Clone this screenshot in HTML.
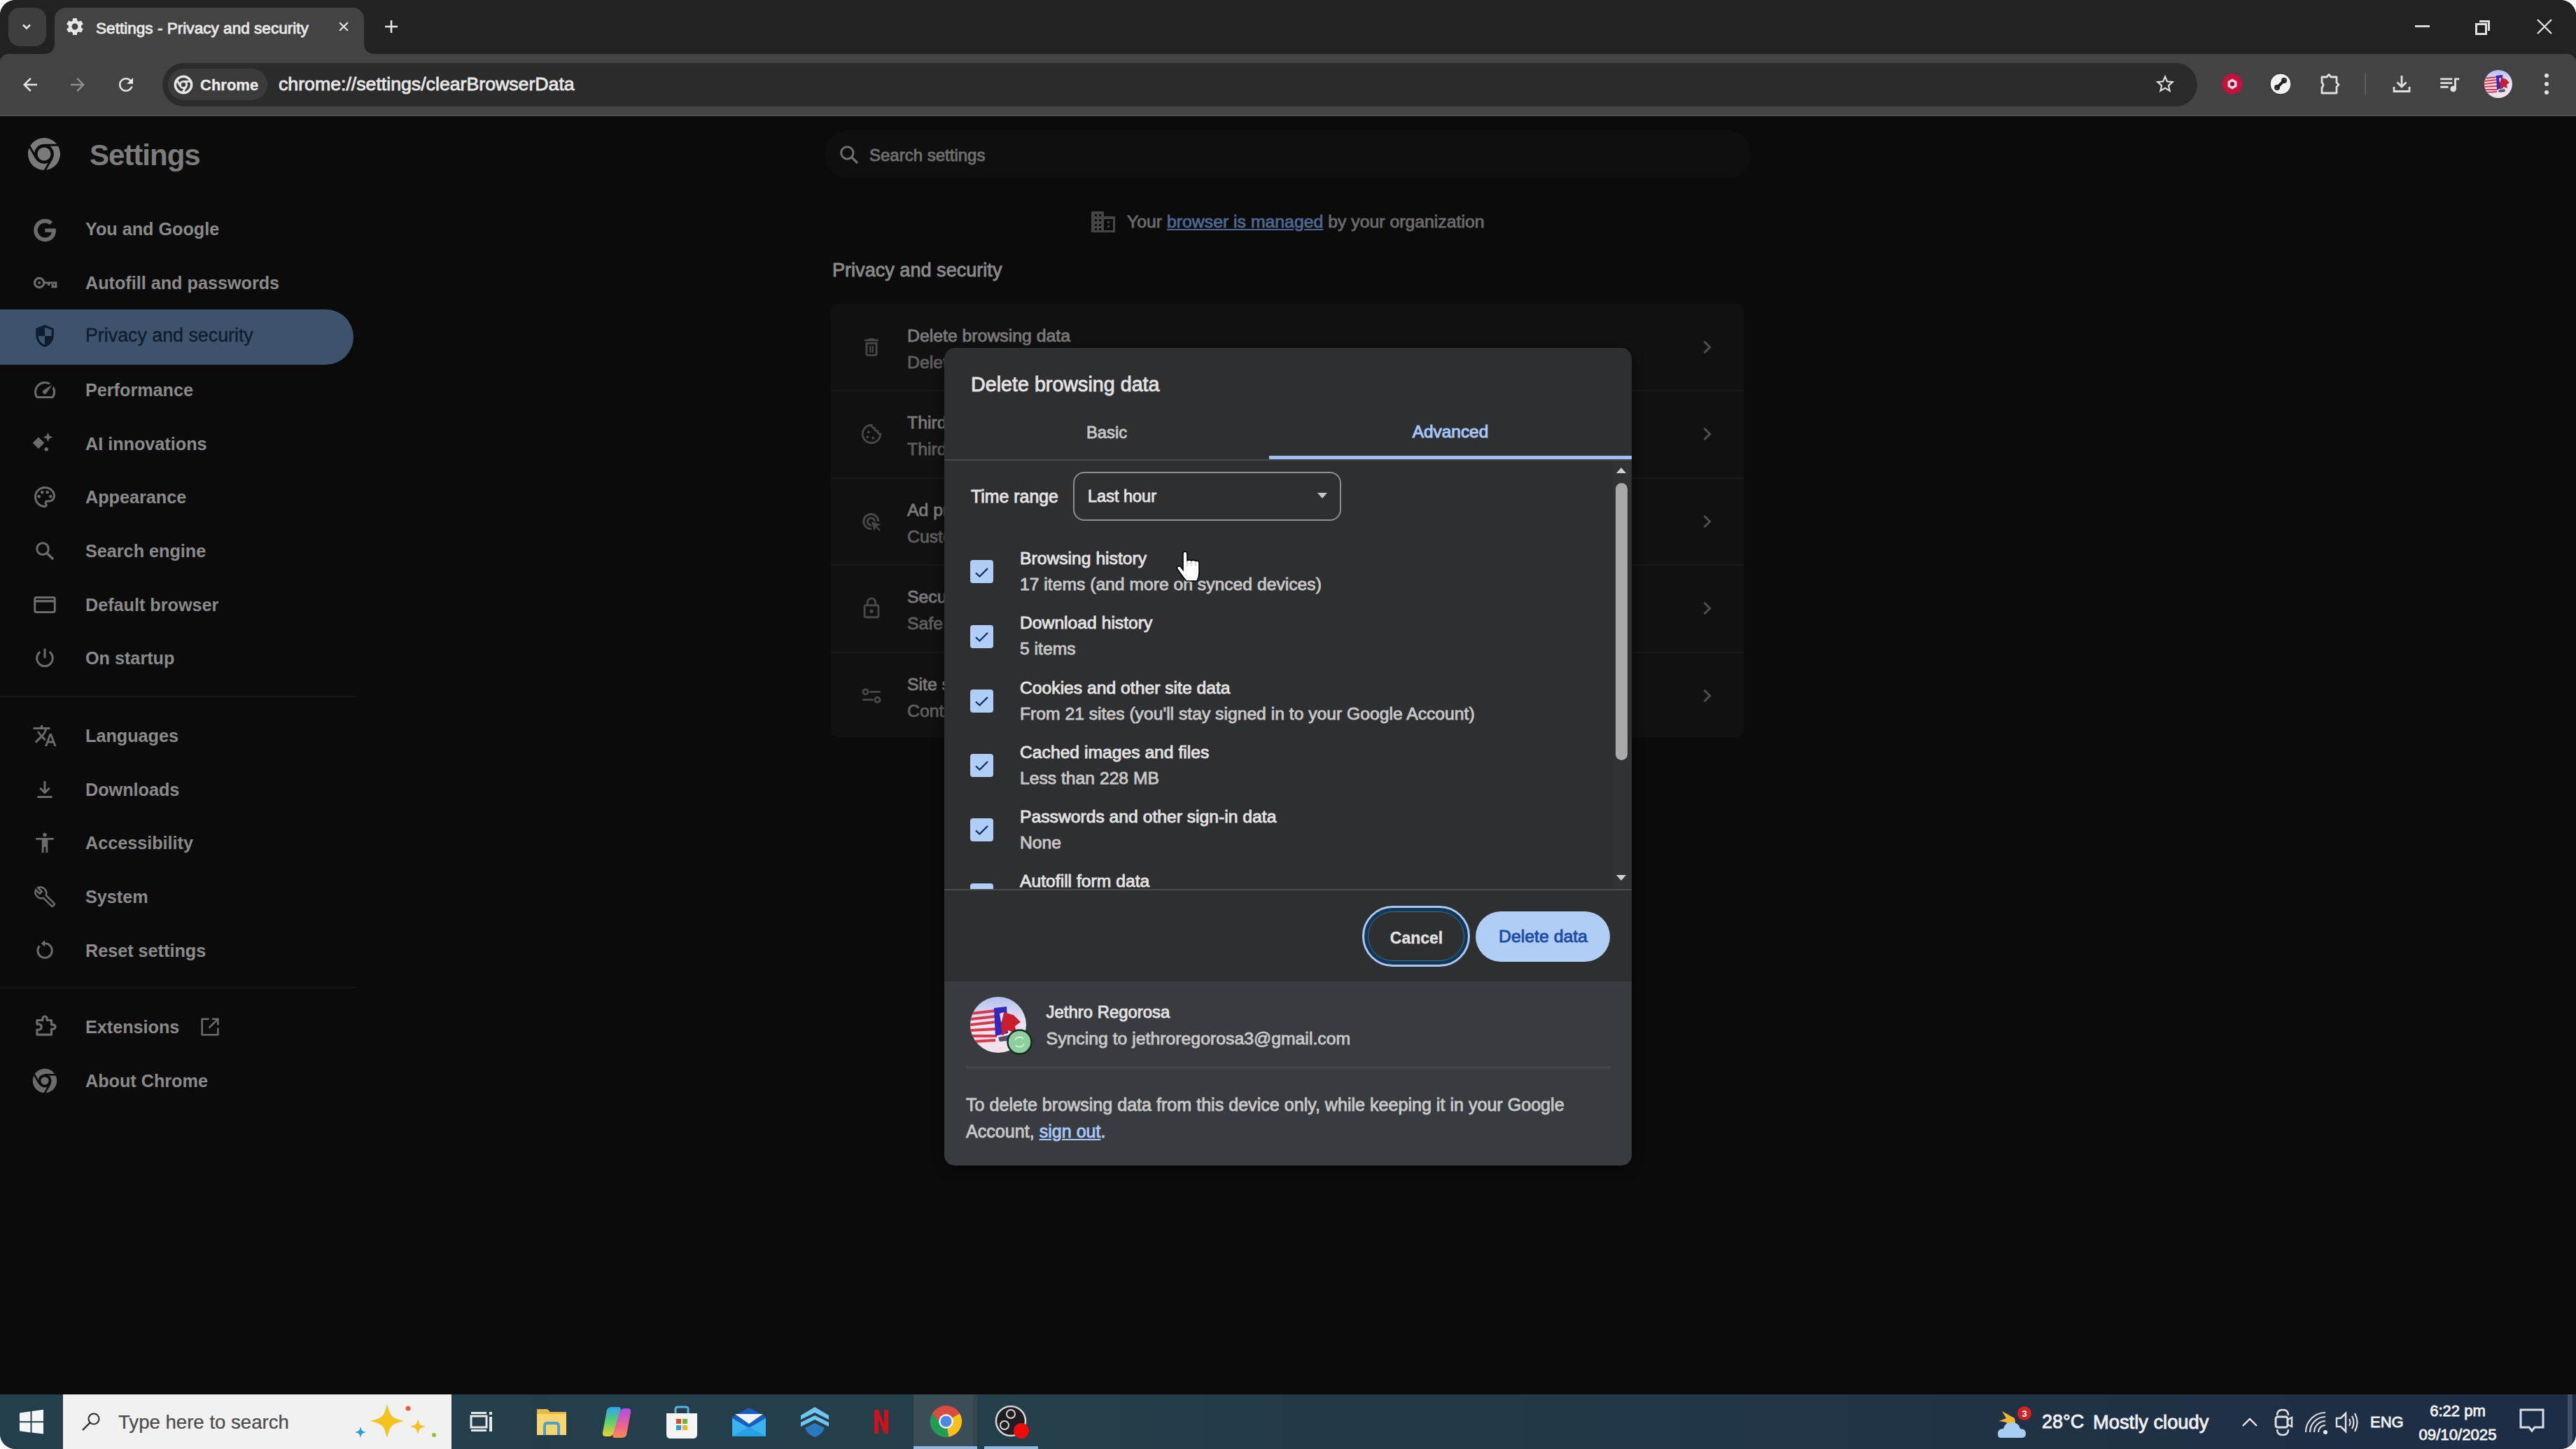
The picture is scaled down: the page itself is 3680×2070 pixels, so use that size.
<!DOCTYPE html>
<html><head><meta charset="utf-8"><style>
html,body{margin:0;padding:0;background:#fff;}
body{width:3680px;height:2070px;overflow:hidden;}
#root{position:relative;width:3680px;height:2070px;border-radius:22px;overflow:hidden;background:#0b0b0b;font-family:"Liberation Sans",sans-serif;}
.a{position:absolute;}
.t{position:absolute;white-space:nowrap;line-height:1;-webkit-text-stroke:0.85px currentColor;}
svg{display:block;}
</style></head><body><div id="root">
<div class="a" style="left:0px;top:0px;width:3680px;height:110px;background:#222222;"></div>
<div class="a" style="left:12px;top:11px;width:54px;height:55px;background:#3e3e3e;border-radius:16px"></div>
<svg class="a" style="left:28.0px;top:28.0px;" width="20" height="20" viewBox="0 0 24 24"><path d="M6 9l6 6 6-6" fill="none" stroke="#e6e6e6" stroke-width="3"/></svg>
<div class="a" style="left:78px;top:11px;width:442px;height:80px;background:#434343;border-radius:16px 16px 0 0"></div>
<svg class="a" style="left:62px;top:61px" width="16" height="16"><path d="M0 16 Q16 16 16 0 L16 16 Z" fill="#434343"/></svg>
<svg class="a" style="left:520px;top:61px" width="16" height="16"><path d="M16 16 Q0 16 0 0 L0 16 Z" fill="#434343"/></svg>
<svg class="a" style="left:92.0px;top:23.0px;" width="30" height="30" viewBox="0 0 24 24"><path fill="#e6e6e6" d="M19.14,12.94c0.04-0.3,0.06-0.61,0.06-0.94c0-0.32-0.02-0.64-0.07-0.94l2.03-1.58c0.18-0.14,0.23-0.41,0.12-0.61 l-1.92-3.32c-0.12-0.22-0.37-0.29-0.59-0.22l-2.39,0.96c-0.5-0.38-1.03-0.7-1.62-0.94L14.4,2.81c-0.04-0.24-0.24-0.41-0.48-0.41 h-3.84c-0.24,0-0.43,0.17-0.47,0.41L9.25,5.35C8.66,5.59,8.12,5.92,7.63,6.29L5.24,5.33c-0.22-0.08-0.47,0-0.59,0.22L2.74,8.87 C2.62,9.08,2.66,9.34,2.86,9.48l2.03,1.580C4.84,11.36,4.8,11.69,4.8,12s0.02,0.64,0.07,0.94l-2.03,1.58 c-0.18,0.14-0.23,0.41-0.12,0.61l1.92,3.32c0.12,0.22,0.37,0.29,0.59,0.22l2.39-0.96c0.5,0.38,1.03,0.7,1.62,0.94l0.36,2.54 c0.05,0.24,0.24,0.41,0.48,0.41h3.84c0.24,0,0.44-0.17,0.47-0.41l0.36-2.54c0.59-0.24,1.13-0.56,1.62-0.94l2.39,0.96 c0.22,0.08,0.47,0,0.59-0.22l1.92-3.32c0.12-0.22,0.07-0.47-0.12-0.61L19.14,12.94z M12,15.6c-1.98,0-3.6-1.62-3.6-3.6 s1.62-3.6,3.6-3.6s3.6,1.62,3.6,3.6S13.98,15.6,12,15.6z"/></svg>
<div class="t" style="left:137.0px;top:29.9px;font-size:22.6px;color:#e8e8e8;font-weight:400;">Settings - Privacy and security</div>
<svg class="a" style="left:481.0px;top:28.0px;" width="20" height="20" viewBox="0 0 24 24"><path d="M5 5L19 19M19 5L5 19" stroke="#e6e6e6" stroke-width="2.6"/></svg>
<svg class="a" style="left:547.0px;top:26.0px;" width="24" height="24" viewBox="0 0 24 24"><path d="M12 3V21M3 12H21" stroke="#e6e6e6" stroke-width="2.6"/></svg>
<div class="a" style="left:3450px;top:36px;width:21px;height:3px;background:#d8d8d8;"></div>
<svg class="a" style="left:3535px;top:27px" width="24" height="24" viewBox="0 0 24 24"><rect x="2.5" y="7.5" width="14" height="14" fill="none" stroke="#e0e0e0" stroke-width="3"/><path d="M7 3.5H20.5V17" fill="none" stroke="#e0e0e0" stroke-width="3"/></svg>
<svg class="a" style="left:3622.0px;top:25.0px;" width="26" height="26" viewBox="0 0 26 26"><path d="M3 3L23 23M23 3L3 23" stroke="#e0e0e0" stroke-width="2.4"/></svg>
<div class="a" style="left:0px;top:77px;width:3680px;height:89px;background:#434343;border-radius:12px 12px 0 0"></div>
<svg class="a" style="left:28.0px;top:106.0px;" width="30" height="30" viewBox="0 0 24 24"><path fill="#e6e6e6" d="M20 11H7.83l5.59-5.59L12 4l-8 8 8 8 1.41-1.41L7.83 13H20v-2z"/></svg>
<svg class="a" style="left:96.0px;top:106.0px;" width="30" height="30" viewBox="0 0 24 24"><path fill="#8e8e8e" d="M12 4l-1.41 1.41L16.17 11H4v2h12.17l-5.58 5.59L12 20l8-8z"/></svg>
<svg class="a" style="left:165.0px;top:106.0px;" width="30" height="30" viewBox="0 0 24 24"><path fill="#e6e6e6" d="M17.65 6.35C16.2 4.9 14.21 4 12 4c-4.42 0-7.99 3.58-7.99 8s3.57 8 7.99 8c3.73 0 6.84-2.55 7.73-6h-2.08c-.82 2.33-3.04 4-5.65 4-3.31 0-6-2.69-6-6s2.69-6 6-6c1.66 0 3.14.69 4.22 1.78L13 11h7V4l-2.35 2.35z"/></svg>
<div class="a" style="left:0px;top:164px;width:3680px;height:2px;background:#4e4e4e;"></div>
<div class="a" style="left:232px;top:90px;width:2907px;height:62px;background:#2b2b2b;border-radius:31px"></div>
<div class="a" style="left:240px;top:98px;width:142px;height:45px;background:#3b3b3b;border-radius:23px"></div>
<svg class="a" style="left:248.0px;top:107.0px;" width="28" height="28" viewBox="0 0 24 24"><circle cx="12" cy="12" r="10" fill="none" stroke="#e6e6e6" stroke-width="3"/><circle cx="12" cy="12" r="4" fill="none" stroke="#e6e6e6" stroke-width="2.5"/><path d="M12 8H21M8.5 14L4 6.5M15.5 14L11 21.5" stroke="#e6e6e6" stroke-width="2.5"/></svg>
<div class="t" style="left:286.0px;top:110.8px;font-size:22px;color:#ececec;font-weight:700;-webkit-text-stroke:0.3px currentColor">Chrome</div>
<div class="t" style="left:398.0px;top:106.8px;font-size:26.7px;color:#e6e6e6;font-weight:400;">chrome://settings/clearBrowserData</div>
<svg class="a" style="left:3077.0px;top:104.0px;" width="32" height="32" viewBox="0 0 24 24"><path fill="#e0e0e0" d="M22 9.24l-7.19-.62L12 2 9.19 8.63 2 9.24l5.46 4.73L5.82 21 12 17.27 18.18 21l-1.63-7.03L22 9.24zM12 15.4l-3.76 2.27 1-4.28-3.32-2.88 4.38-.38L12 6.1l1.71 4.04 4.38.38-3.32 2.88 1 4.28L12 15.4z"/></svg>
<svg class="a" style="left:3172.0px;top:103.0px;" width="34" height="34" viewBox="0 0 34 34"><circle cx="17" cy="17" r="14.5" fill="#c8103c"/><path d="M17 9.5 L23.5 13.25 V20.75 L17 24.5 L10.5 20.75 V13.25 Z" fill="#f4d0dc"/><circle cx="17" cy="17" r="3" fill="#7a0a20"/></svg>
<svg class="a" style="left:3241.0px;top:103.0px;" width="34" height="34" viewBox="0 0 34 34"><circle cx="17" cy="17" r="15" fill="#f2f2f2" stroke="#222" stroke-width="1"/><path d="M11 23 L23 11" stroke="#222" stroke-width="4"/><circle cx="12" cy="22" r="3" fill="none" stroke="#222" stroke-width="2"/><circle cx="22" cy="12" r="3" fill="none" stroke="#222" stroke-width="2"/></svg>
<svg class="a" style="left:3310.0px;top:103.0px;" width="34" height="34" viewBox="0 0 34 34"><path d="M7 7 H14 L17 3.5 L20 7 H28 V15 L31 18 L28 21 V30 H7 V22 Q11 18.5 7 15 Z" fill="none" stroke="#e0e0e0" stroke-width="2.8" stroke-linejoin="round"/></svg>
<div class="a" style="left:3378px;top:104px;width:2px;height:32px;background:#5e5e5e;"></div>
<svg class="a" style="left:3414.0px;top:103.0px;" width="34" height="34" viewBox="0 0 34 34"><path d="M17 5 V21 M10.5 14.5 L17 21 L23.5 14.5" fill="none" stroke="#e0e0e0" stroke-width="2.8"/><path d="M6 21 V27.5 H28 V21" fill="none" stroke="#e0e0e0" stroke-width="2.8"/></svg>
<svg class="a" style="left:3482.0px;top:103.0px;" width="34" height="34" viewBox="0 0 24 24"><path fill="#e0e0e0" d="M15 6H3v2h12V6zm0 4H3v2h12v-2zM3 16h8v-2H3v2zM17 6v8.18c-.31-.11-.65-.18-1-.18-1.66 0-3 1.34-3 3s1.34 3 3 3 3-1.34 3-3V8h3V6h-5z"/></svg>
<svg class="a" style="left:3549px;top:100px" width="40" height="40" viewBox="0 0 80 80"><defs><clipPath id="av1"><circle cx="40" cy="40" r="40"/></clipPath><linearGradient id="avg1" x1="0" y1="0" x2="0" y2="1"><stop offset="0" stop-color="#b4c0ee"/><stop offset=".45" stop-color="#e8e4f4"/><stop offset="1" stop-color="#f2e2ea"/></linearGradient></defs><g clip-path="url(#av1)"><rect width="80" height="80" fill="url(#avg1)"/><g stroke="#d83a4a" stroke-width="4.2"><path d="M0 24 L36 20"/><path d="M0 32 L36 28"/><path d="M0 40 L36 36"/><path d="M0 48 L36 46"/><path d="M0 56 L38 56"/><path d="M4 64 L36 62"/></g><path d="M34 16 L52 14 L54 52 L36 56 Z" fill="#3028c0"/><path d="M42 24 L48 22 L50 34 L44 36 Z" fill="#dfe4ff"/><path d="M48 22 L62 26 L72 36 L64 42 L66 52 L54 48 L46 56 L44 40 Z" fill="#c81e30"/><path d="M40 58 L58 54 L60 62 L42 64 Z" fill="#505068"/></g></svg>
<svg class="a" style="left:3628px;top:102px" width="20" height="36" viewBox="0 0 20 36"><circle cx="10" cy="6" r="3" fill="#e0e0e0"/><circle cx="10" cy="18" r="3" fill="#e0e0e0"/><circle cx="10" cy="30" r="3" fill="#e0e0e0"/></svg>
<div class="a" style="left:0px;top:166px;width:3680px;height:1826px;background:#0b0b0b;"></div>
<svg class="a" style="left:39.0px;top:196.0px;" width="48" height="48" viewBox="0 0 48 48"><circle cx="24" cy="24" r="23" fill="#7a7a7a"/><circle cx="24" cy="24" r="13.899999999999999" fill="#0b0b0b"/><circle cx="24" cy="24" r="9.5" fill="#7a7a7a"/><path d="M24.00 11.30 L50.00 11.30" stroke="#0b0b0b" stroke-width="3"/><path d="M35.00 30.35 L22.00 52.87" stroke="#0b0b0b" stroke-width="3"/><path d="M13.00 30.35 L0.00 7.83" stroke="#0b0b0b" stroke-width="3"/></svg>
<div class="t" style="left:128.0px;top:201.4px;font-size:42px;color:#7c7c7c;font-weight:700;letter-spacing:-1px;-webkit-text-stroke:0">Settings</div>
<div class="a" style="left:0px;top:442px;width:505px;height:79px;background:#3d526b;border-radius:0 40px 40px 0"></div>
<div class="a" style="left:0px;top:994px;width:508px;height:2px;background:#161616;"></div>
<div class="a" style="left:0px;top:1410px;width:508px;height:2px;background:#161616;"></div>
<div class="t" style="left:122.0px;top:314.7px;font-size:25.2px;color:#8a8a8a;font-weight:700;-webkit-text-stroke:0">You and Google</div>
<div class="t" style="left:122.0px;top:391.7px;font-size:25.2px;color:#8a8a8a;font-weight:700;-webkit-text-stroke:0">Autofill and passwords</div>
<div class="t" style="left:122.0px;top:466.3px;font-size:26.8px;color:#0d1b2e;font-weight:400;-webkit-text-stroke:0.3px currentColor">Privacy and security</div>
<div class="t" style="left:122.0px;top:544.7px;font-size:25.2px;color:#8a8a8a;font-weight:700;-webkit-text-stroke:0">Performance</div>
<div class="t" style="left:122.0px;top:621.7px;font-size:25.2px;color:#8a8a8a;font-weight:700;-webkit-text-stroke:0">AI innovations</div>
<div class="t" style="left:122.0px;top:697.7px;font-size:25.2px;color:#8a8a8a;font-weight:700;-webkit-text-stroke:0">Appearance</div>
<div class="t" style="left:122.0px;top:774.7px;font-size:25.2px;color:#8a8a8a;font-weight:700;-webkit-text-stroke:0">Search engine</div>
<div class="t" style="left:122.0px;top:851.7px;font-size:25.2px;color:#8a8a8a;font-weight:700;-webkit-text-stroke:0">Default browser</div>
<div class="t" style="left:122.0px;top:927.7px;font-size:25.2px;color:#8a8a8a;font-weight:700;-webkit-text-stroke:0">On startup</div>
<div class="t" style="left:122.0px;top:1039.2px;font-size:25.2px;color:#8a8a8a;font-weight:700;-webkit-text-stroke:0">Languages</div>
<div class="t" style="left:122.0px;top:1115.7px;font-size:25.2px;color:#8a8a8a;font-weight:700;-webkit-text-stroke:0">Downloads</div>
<div class="t" style="left:122.0px;top:1191.7px;font-size:25.2px;color:#8a8a8a;font-weight:700;-webkit-text-stroke:0">Accessibility</div>
<div class="t" style="left:122.0px;top:1268.7px;font-size:25.2px;color:#8a8a8a;font-weight:700;-webkit-text-stroke:0">System</div>
<div class="t" style="left:122.0px;top:1345.7px;font-size:25.2px;color:#8a8a8a;font-weight:700;-webkit-text-stroke:0">Reset settings</div>
<div class="t" style="left:122.0px;top:1454.7px;font-size:25.2px;color:#8a8a8a;font-weight:700;-webkit-text-stroke:0">Extensions</div>
<div class="t" style="left:122.0px;top:1531.7px;font-size:25.2px;color:#8a8a8a;font-weight:700;-webkit-text-stroke:0">About Chrome</div>
<div class="a" style="left:1178px;top:186px;width:1323px;height:69px;background:#0f0f0f;border-radius:35px"></div>
<svg class="a" style="left:1197.0px;top:205.0px;" width="32" height="32" viewBox="0 0 24 24"><circle cx="10" cy="10" r="6.5" fill="none" stroke="#707070" stroke-width="2.2"/><path d="M15 15L21 21" stroke="#707070" stroke-width="2.4"/></svg>
<div class="t" style="left:1242.0px;top:209.7px;font-size:24px;color:#6e6e6e;font-weight:400;">Search settings</div>
<svg class="a" style="left:1558px;top:301px" width="36" height="32" viewBox="0 0 36 32"><path d="M1 1 H19 V8 H35 V31 H1 Z" fill="#454545"/><g fill="#0b0b0b"><rect x="6" y="5" width="3" height="3"/><rect x="12" y="5" width="3" height="3"/><rect x="6" y="12" width="3" height="3"/><rect x="12" y="12" width="3" height="3"/><rect x="6" y="19" width="3" height="3"/><rect x="12" y="19" width="3" height="3"/><rect x="6" y="25" width="3" height="3"/><rect x="12" y="25" width="3" height="3"/><rect x="19" y="12" width="13" height="16"/></g><g fill="#454545"><rect x="24" y="15" width="3" height="3"/><rect x="24" y="21" width="3" height="3"/></g></svg>
<div class="t" style="left:1610.0px;top:305.0px;font-size:24.8px;color:#6a6a6a;font-weight:400;">Your <span style="color:#4c6790;text-decoration:underline">browser is managed</span> by your organization</div>
<div class="t" style="left:1189.0px;top:372.1px;font-size:27.1px;color:#8a8a8a;font-weight:400;">Privacy and security</div>
<div class="a" style="left:1187px;top:434px;width:1304px;height:619px;background:#111111;border-radius:10px"></div>
<div class="a" style="left:1187px;top:557px;width:1304px;height:2px;background:#181818;"></div>
<div class="a" style="left:1187px;top:682px;width:1304px;height:2px;background:#181818;"></div>
<div class="a" style="left:1187px;top:806px;width:1304px;height:2px;background:#181818;"></div>
<div class="a" style="left:1187px;top:931px;width:1304px;height:2px;background:#181818;"></div>
<div class="t" style="left:1296.0px;top:467.5px;font-size:24.8px;color:#7a7a7a;font-weight:400;">Delete browsing data</div>
<div class="t" style="left:1296.0px;top:505.5px;font-size:24.8px;color:#5e5e5e;font-weight:400;">Delete history, cookies, cache, and more</div>
<svg class="a" style="left:2424.0px;top:482.0px;" width="28" height="28" viewBox="0 0 24 24"><path d="M9 5l7 7-7 7" fill="none" stroke="#4e4e4e" stroke-width="2.6"/></svg>
<div class="t" style="left:1296.0px;top:591.5px;font-size:24.8px;color:#7a7a7a;font-weight:400;">Third-party cookies</div>
<div class="t" style="left:1296.0px;top:629.5px;font-size:24.8px;color:#5e5e5e;font-weight:400;">Third-party cookies are blocked in Incognito mode</div>
<svg class="a" style="left:2424.0px;top:606.0px;" width="28" height="28" viewBox="0 0 24 24"><path d="M9 5l7 7-7 7" fill="none" stroke="#4e4e4e" stroke-width="2.6"/></svg>
<div class="t" style="left:1296.0px;top:716.5px;font-size:24.8px;color:#7a7a7a;font-weight:400;">Ad privacy</div>
<div class="t" style="left:1296.0px;top:754.5px;font-size:24.8px;color:#5e5e5e;font-weight:400;">Customize the info used by sites to show you ads</div>
<svg class="a" style="left:2424.0px;top:731.0px;" width="28" height="28" viewBox="0 0 24 24"><path d="M9 5l7 7-7 7" fill="none" stroke="#4e4e4e" stroke-width="2.6"/></svg>
<div class="t" style="left:1296.0px;top:840.5px;font-size:24.8px;color:#7a7a7a;font-weight:400;">Security</div>
<div class="t" style="left:1296.0px;top:878.5px;font-size:24.8px;color:#5e5e5e;font-weight:400;">Safe Browsing (protection from dangerous sites) and other security settings</div>
<svg class="a" style="left:2424.0px;top:855.0px;" width="28" height="28" viewBox="0 0 24 24"><path d="M9 5l7 7-7 7" fill="none" stroke="#4e4e4e" stroke-width="2.6"/></svg>
<div class="t" style="left:1296.0px;top:965.5px;font-size:24.8px;color:#7a7a7a;font-weight:400;">Site settings</div>
<div class="t" style="left:1296.0px;top:1003.5px;font-size:24.8px;color:#5e5e5e;font-weight:400;">Controls what information sites can use and show</div>
<svg class="a" style="left:2424.0px;top:980.0px;" width="28" height="28" viewBox="0 0 24 24"><path d="M9 5l7 7-7 7" fill="none" stroke="#4e4e4e" stroke-width="2.6"/></svg>
<div class="a" style="left:1349px;top:497px;width:982px;height:1168px;background:#2e2f31;border-radius:15px;overflow:hidden;box-shadow:0 4px 16px rgba(0,0,0,.5)"></div>
<div class="t" style="left:1387.0px;top:535.1px;font-size:28.7px;color:#e3e3e3;font-weight:400;">Delete browsing data</div>
<div class="t" style="left:581.0px;width:2000px;text-align:center;top:605.9px;font-size:23.8px;color:#c4c7c5;font-weight:400;">Basic</div>
<div class="t" style="left:1072.0px;width:2000px;text-align:center;top:605.3px;font-size:24.4px;color:#a8c7fa;font-weight:400;-webkit-text-stroke:1px currentColor">Advanced</div>
<div class="a" style="left:1349px;top:656px;width:982px;height:2px;background:#474747;"></div>
<div class="a" style="left:1813px;top:651px;width:518px;height:5px;background:#a0c0f4;"></div>
<div class="a" style="left:1349px;top:1402px;width:982px;height:263px;background:#383b40;border-radius:0 0 15px 15px"></div>
<div class="a" style="left:1349px;top:1270px;width:982px;height:2px;background:#4a4a4a;"></div>
<div class="a" style="left:1349px;top:658px;width:982px;height:612px;overflow:hidden">
<div class="t" style="left:38.0px;top:38.9px;font-size:24.9px;color:#e3e3e3;font-weight:400;">Time range</div>
<div class="a" style="left:184px;top:16px;width:383px;height:70px;background:transparent;box-sizing:border-box;border:2px solid #8e8e8e;border-radius:16px"></div>
<div class="t" style="left:205.0px;top:40.1px;font-size:23.5px;color:#e3e3e3;font-weight:400;">Last hour</div>
<svg class="a" style="left:532.0px;top:42.0px;" width="16" height="16" viewBox="0 0 16 16"><path d="M1 4 H15 L8 12 Z" fill="#c7c7c7"/></svg>
<div class="t" style="left:108.0px;top:128.1px;font-size:24.7px;color:#e3e3e3;font-weight:400;">Browsing history</div>
<div class="t" style="left:108.0px;top:165.1px;font-size:24.7px;color:#c7c7c7;font-weight:400;">17 items (and more on synced devices)</div>
<div class="a" style="left:37px;top:142px;width:33px;height:33px;background:#b0cdf6;border-radius:4px"></div>
<svg class="a" style="left:37.0px;top:142.5px;" width="33" height="33" viewBox="0 0 33 33"><path d="M8 17.5 L13.5 22.5 L25 11" fill="none" stroke="#062e6f" stroke-width="2.3"/></svg>
<div class="t" style="left:108.0px;top:220.3px;font-size:24.7px;color:#e3e3e3;font-weight:400;">Download history</div>
<div class="t" style="left:108.0px;top:257.3px;font-size:24.7px;color:#c7c7c7;font-weight:400;">5 items</div>
<div class="a" style="left:37px;top:235px;width:33px;height:33px;background:#b0cdf6;border-radius:4px"></div>
<svg class="a" style="left:37.0px;top:234.7px;" width="33" height="33" viewBox="0 0 33 33"><path d="M8 17.5 L13.5 22.5 L25 11" fill="none" stroke="#062e6f" stroke-width="2.3"/></svg>
<div class="t" style="left:108.0px;top:312.5px;font-size:24.7px;color:#e3e3e3;font-weight:400;">Cookies and other site data</div>
<div class="t" style="left:108.0px;top:349.5px;font-size:24.7px;color:#c7c7c7;font-weight:400;">From 21 sites (you'll stay signed in to your Google Account)</div>
<div class="a" style="left:37px;top:327px;width:33px;height:33px;background:#b0cdf6;border-radius:4px"></div>
<svg class="a" style="left:37.0px;top:326.9px;" width="33" height="33" viewBox="0 0 33 33"><path d="M8 17.5 L13.5 22.5 L25 11" fill="none" stroke="#062e6f" stroke-width="2.3"/></svg>
<div class="t" style="left:108.0px;top:404.7px;font-size:24.7px;color:#e3e3e3;font-weight:400;">Cached images and files</div>
<div class="t" style="left:108.0px;top:441.7px;font-size:24.7px;color:#c7c7c7;font-weight:400;">Less than 228 MB</div>
<div class="a" style="left:37px;top:419px;width:33px;height:33px;background:#b0cdf6;border-radius:4px"></div>
<svg class="a" style="left:37.0px;top:419.1px;" width="33" height="33" viewBox="0 0 33 33"><path d="M8 17.5 L13.5 22.5 L25 11" fill="none" stroke="#062e6f" stroke-width="2.3"/></svg>
<div class="t" style="left:108.0px;top:496.9px;font-size:24.7px;color:#e3e3e3;font-weight:400;">Passwords and other sign-in data</div>
<div class="t" style="left:108.0px;top:533.9px;font-size:24.7px;color:#c7c7c7;font-weight:400;">None</div>
<div class="a" style="left:37px;top:511px;width:33px;height:33px;background:#b0cdf6;border-radius:4px"></div>
<svg class="a" style="left:37.0px;top:511.3px;" width="33" height="33" viewBox="0 0 33 33"><path d="M8 17.5 L13.5 22.5 L25 11" fill="none" stroke="#062e6f" stroke-width="2.3"/></svg>
<div class="t" style="left:108.0px;top:589.1px;font-size:24.7px;color:#e3e3e3;font-weight:400;">Autofill form data</div>
<div class="a" style="left:37px;top:604px;width:33px;height:33px;background:#b0cdf6;border-radius:4px"></div>
<svg class="a" style="left:37.0px;top:603.5px;" width="33" height="33" viewBox="0 0 33 33"><path d="M8 17.5 L13.5 22.5 L25 11" fill="none" stroke="#062e6f" stroke-width="2.3"/></svg>
<div class="a" style="left:955px;top:0px;width:27px;height:612px;background:#313234;"></div>
<svg class="a" style="left:959.0px;top:6.0px;" width="16" height="16" viewBox="0 0 16 16"><path d="M1 12 H15 L8 4 Z" fill="#d0d0d0"/></svg>
<div class="a" style="left:959px;top:32px;width:17px;height:396px;background:#a9a9a9;border-radius:9px"></div>
<svg class="a" style="left:959.0px;top:588.0px;" width="16" height="16" viewBox="0 0 16 16"><path d="M1 4 H15 L8 12 Z" fill="#d0d0d0"/></svg>
</div>
<div class="a" style="left:1946px;top:1294px;width:154px;height:87px;background:transparent;box-sizing:border-box;border:3px solid #a8c7fa;border-radius:44px"></div>
<div class="a" style="left:1950px;top:1298px;width:146px;height:79px;background:transparent;box-sizing:border-box;border:4px solid #0b3a5e;border-radius:40px"></div>
<div class="a" style="left:1954px;top:1302px;width:138px;height:71px;background:transparent;box-sizing:border-box;border:1.5px solid #3d6f8e;border-radius:36px"></div>
<div class="t" style="left:1023.5px;width:2000px;text-align:center;top:1328.5px;font-size:23px;color:#e3e3e3;font-weight:700;-webkit-text-stroke:0.3px currentColor">Cancel</div>
<div class="a" style="left:2108px;top:1302px;width:192px;height:72px;background:#b0cdf6;border-radius:36px"></div>
<div class="t" style="left:1204.5px;width:2000px;text-align:center;top:1326.4px;font-size:24.8px;color:#1a4ca4;font-weight:400;">Delete data</div>
<svg class="a" style="left:1386px;top:1424px" width="80" height="80" viewBox="0 0 80 80"><defs><clipPath id="av2"><circle cx="40" cy="40" r="40"/></clipPath><linearGradient id="avg2" x1="0" y1="0" x2="0" y2="1"><stop offset="0" stop-color="#b4c0ee"/><stop offset=".45" stop-color="#e8e4f4"/><stop offset="1" stop-color="#f2e2ea"/></linearGradient></defs><g clip-path="url(#av2)"><rect width="80" height="80" fill="url(#avg2)"/><g stroke="#d83a4a" stroke-width="4.2"><path d="M0 24 L36 20"/><path d="M0 32 L36 28"/><path d="M0 40 L36 36"/><path d="M0 48 L36 46"/><path d="M0 56 L38 56"/><path d="M4 64 L36 62"/></g><path d="M34 16 L52 14 L54 52 L36 56 Z" fill="#3028c0"/><path d="M42 24 L48 22 L50 34 L44 36 Z" fill="#dfe4ff"/><path d="M48 22 L62 26 L72 36 L64 42 L66 52 L54 48 L46 56 L44 40 Z" fill="#c81e30"/><path d="M40 58 L58 54 L60 62 L42 64 Z" fill="#505068"/></g></svg>
<svg class="a" style="left:1438px;top:1470px" width="37" height="37" viewBox="0 0 37 37"><circle cx="18.5" cy="18.5" r="17" fill="#8fcf9f" stroke="#1a2a20" stroke-width="2.5"/><path d="M12 16 A7 7 0 0 1 24 14 M25 21 A7 7 0 0 1 13 23" fill="none" stroke="#c8f0d0" stroke-width="2"/></svg>
<div class="t" style="left:1494.6px;top:1433.8px;font-size:23.9px;color:#e3e3e3;font-weight:400;">Jethro Regorosa</div>
<div class="t" style="left:1494.6px;top:1472.0px;font-size:24.8px;color:#c7c7c7;font-weight:400;">Syncing to jethroregorosa3@gmail.com</div>
<div class="a" style="left:1380px;top:1523px;width:921px;height:4px;background:#444649;"></div>
<div class="t" style="left:1380.0px;top:1565.8px;font-size:25.1px;color:#c7c7c7;font-weight:400;">To delete browsing data from this device only, while keeping it in your Google</div>
<div class="t" style="left:1380.0px;top:1603.8px;font-size:25.1px;color:#c7c7c7;font-weight:400;">Account, <span style="color:#a8c7fa;text-decoration:underline">sign out</span>.</div>
<svg class="a" style="left:42.0px;top:307.0px;" width="44" height="44" viewBox="0 0 24 24"><path d="M20.6 10.6H12.2v2.9h5.2c-.5 2.6-2.6 4.2-5.3 4.2-3.1 0-5.7-2.6-5.7-5.7s2.6-5.7 5.7-5.7c1.5 0 2.8.5 3.8 1.4l2.2-2.2C16.6 4 14.5 3.2 12.2 3.2 7.3 3.2 3.4 7.1 3.4 12s3.9 8.8 8.8 8.8c5.1 0 8.5-3.6 8.5-8.6 0-.6-.1-1.1-.1-1.6z" fill="#6c6c6c"/></svg>
<svg class="a" style="left:45.0px;top:385.0px;" width="38" height="38" viewBox="0 0 24 24"><circle cx="7" cy="12" r="4.2" fill="none" stroke="#6c6c6c" stroke-width="2"/><circle cx="7" cy="12" r="1.2" fill="#6c6c6c"/><path d="M11.2 12H22V15.5H19V13.2M15.5 12V14.5" fill="none" stroke="#6c6c6c" stroke-width="2"/></svg>
<svg class="a" style="left:46.0px;top:462.0px;" width="36" height="36" viewBox="0 0 24 24"><path d="M12 2.5L4.5 5.5V11c0 4.8 3.2 9.1 7.5 10.5 4.3-1.4 7.5-5.7 7.5-10.5V5.5z" fill="#3d526b" stroke="#0d1b2e" stroke-width="2"/><path d="M12 3.5V12H5.5V6.2z M12 12H18.5C18.1 15.8 15.6 19.2 12 20.4z" fill="#0d1b2e"/></svg>
<svg class="a" style="left:46.0px;top:539.0px;" width="36" height="36" viewBox="0 0 24 24"><path fill="#6c6c6c" d="M20.38 8.57l-1.23 1.85a8 8 0 0 1-.22 7.58H5.07A8 8 0 0 1 15.58 6.85l1.85-1.23A10 10 0 0 0 3.35 19a2 2 0 0 0 1.72 1h13.85a2 2 0 0 0 1.74-1 10 10 0 0 0-.27-10.44zm-9.79 6.84a2 2 0 0 0 2.830 0l5.66-8.49-8.49 5.66a2 2 0 0 0 0 2.83z"/></svg>
<svg class="a" style="left:43.0px;top:614.0px;" width="36" height="36" viewBox="0 0 24 24"><path d="M8 7 L13.5 12.5 L8 18 L2.5 12.5 Z" fill="#6c6c6c"/><path d="M17 2.5 L18.3 5.7 L21.5 7 L18.3 8.3 L17 11.5 L15.7 8.3 L12.5 7 L15.7 5.7 Z" fill="#6c6c6c"/><circle cx="15.5" cy="18.5" r="1.8" fill="#6c6c6c"/></svg>
<svg class="a" style="left:46.0px;top:692.0px;" width="36" height="36" viewBox="0 0 24 24"><path fill="#6c6c6c" d="M12 22C6.49 22 2 17.51 2 12S6.49 2 12 2s10 4.04 10 9c0 3.31-2.69 6-6 6h-1.77c-.28 0-.5.22-.5.5 0 .12.05.23.13.33.41.47.64 1.06.64 1.67 0 1.38-1.12 2.5-2.5 2.5zm0-18c-4.41 0-8 3.59-8 8s3.59 8 8 8c.28 0 .5-.22.5-.5 0-.16-.08-.28-.14-.35-.41-.46-.63-1.05-.63-1.65 0-1.38 1.12-2.5 2.5-2.5H16c2.21 0 4-1.79 4-4 0-3.86-3.59-7-8-7z"/><circle cx="6.5" cy="11.5" r="1.5" fill="#6c6c6c"/><circle cx="9.5" cy="7.5" r="1.5" fill="#6c6c6c"/><circle cx="14.5" cy="7.5" r="1.5" fill="#6c6c6c"/><circle cx="17.5" cy="11.5" r="1.5" fill="#6c6c6c"/></svg>
<svg class="a" style="left:46.0px;top:769.0px;" width="36" height="36" viewBox="0 0 24 24"><circle cx="10" cy="10" r="5.5" fill="none" stroke="#6c6c6c" stroke-width="2"/><path d="M14 14L20 20" stroke="#6c6c6c" stroke-width="2.2"/></svg>
<svg class="a" style="left:46.0px;top:846.0px;" width="36" height="36" viewBox="0 0 24 24"><rect x="2.5" y="5" width="19" height="14" rx="1.5" fill="none" stroke="#6c6c6c" stroke-width="2"/><path d="M2.5 8.5H21.5" stroke="#6c6c6c" stroke-width="2.2"/></svg>
<svg class="a" style="left:46.0px;top:922.0px;" width="36" height="36" viewBox="0 0 24 24"><path d="M12 3V12" stroke="#6c6c6c" stroke-width="2"/><path d="M7.5 6.2A7.5 7.5 0 1 0 16.5 6.2" fill="none" stroke="#6c6c6c" stroke-width="2"/></svg>
<svg class="a" style="left:46.0px;top:1033.0px;" width="36" height="36" viewBox="0 0 24 24"><path fill="#6c6c6c" d="M12.87 15.07l-2.54-2.51.03-.03c1.74-1.94 2.98-4.17 3.71-6.53H17V4h-7V2H8v2H1v1.99h11.17C11.5 7.92 10.44 9.750 9 11.35 8.07 10.32 7.3 9.19 6.69 8h-2c.73 1.63 1.73 3.17 2.98 4.56l-5.09 5.02L4 19l5-5 3.11 3.11.76-2.04zM18.5 10h-2L12 22h2l1.12-3h4.75L21 22h2l-4.5-12zm-2.62 7l1.62-4.33L19.12 17h-3.24z"/></svg>
<svg class="a" style="left:46.0px;top:1110.0px;" width="36" height="36" viewBox="0 0 24 24"><path d="M12 4V15M7.5 10.5L12 15L16.5 10.5" fill="none" stroke="#6c6c6c" stroke-width="2"/><path d="M5 19H19" stroke="#6c6c6c" stroke-width="2"/></svg>
<svg class="a" style="left:47.0px;top:1187.0px;" width="34" height="34" viewBox="0 0 24 24"><path fill="#6c6c6c" d="M12 2c1.1 0 2 .9 2 2s-.9 2-2 2-2-.9-2-2 .9-2 2-2zm9 7h-6v13h-2v-6h-2v6H9V9H3V7h18v2z"/></svg>
<svg class="a" style="left:47.0px;top:1264.0px;" width="34" height="34" viewBox="0 0 24 24"><path fill="none" stroke="#6c6c6c" stroke-width="1.8" d="M21.5 18.8l-8.3-8.3c.8-2.1.4-4.6-1.4-6.3-1.8-1.8-4.5-2.2-6.7-1.2L9 6.9 6.9 9 3 5.1c-1 2.200-.6 4.900 1.2 6.700 1.700 1.800 4.200 2.200 6.300 1.400l8.300 8.300c.3.3.9.3 1.200 0l1.500-1.500c.4-.4.4-.900 0-1.200z"/></svg>
<svg class="a" style="left:46.0px;top:1340.0px;" width="36" height="36" viewBox="0 0 24 24"><path d="M7 7.5A6.8 6.8 0 1 0 12 5.2" fill="none" stroke="#6c6c6c" stroke-width="2"/><path d="M12 2 L12 8.5 L8.5 5.2 Z" fill="#6c6c6c"/></svg>
<svg class="a" style="left:45.0px;top:1448.0px;" width="38" height="38" viewBox="0 0 24 24"><path d="M5 6 H10 V4.5 A2 2 0 0 1 14 4.5 V6 H18 V10 H19.5 A2 2 0 0 1 19.5 14 H18 V19 H5 V14.5 H6.5 A2.5 2.5 0 0 0 6.5 9.5 H5 Z" fill="none" stroke="#6c6c6c" stroke-width="2" stroke-linejoin="round"/></svg>
<svg class="a" style="left:283.0px;top:1450.0px;" width="34" height="34" viewBox="0 0 24 24"><path d="M11 4H4V20H20V13" fill="none" stroke="#6c6c6c" stroke-width="1.8"/><path d="M14 4H20V10M20 4L11 13" fill="none" stroke="#6c6c6c" stroke-width="1.8"/></svg>
<svg class="a" style="left:46.0px;top:1526.0px;" width="36" height="36" viewBox="0 0 48 48"><circle cx="24" cy="24" r="23" fill="#6c6c6c"/><circle cx="24" cy="24" r="12.7" fill="#0b0b0b"/><circle cx="24" cy="24" r="7.5" fill="#6c6c6c"/><path d="M24.00 12.50 L50.00 12.50" stroke="#0b0b0b" stroke-width="3.5"/><path d="M33.96 29.75 L20.96 52.27" stroke="#0b0b0b" stroke-width="3.5"/><path d="M14.04 29.75 L1.04 7.23" stroke="#0b0b0b" stroke-width="3.5"/></svg>
<svg class="a" style="left:1228.0px;top:479.0px;" width="34" height="34" viewBox="0 0 24 24"><path fill="#484848" d="M6 19c0 1.1.9 2 2 2h8c1.1 0 2-.9 2-2V7H6v12zM8 9h8v10H8V9zm2 1.5h1.5v7H10zm2.5 0H14v7h-1.5zM15.5 4l-1-1h-5l-1 1H5v2h14V4h-3.5z"/></svg>
<svg class="a" style="left:1228.0px;top:603.0px;" width="34" height="34" viewBox="0 0 24 24"><path d="M12 3a9 9 0 1 0 9 9 3 3 0 0 1-3-3 3 3 0 0 1-3-3 3 3 0 0 1-3-3z" fill="none" stroke="#484848" stroke-width="2"/><circle cx="9" cy="10" r="1.3" fill="#484848"/><circle cx="8" cy="15" r="1.3" fill="#484848"/><circle cx="13.5" cy="16" r="1.3" fill="#484848"/></svg>
<svg class="a" style="left:1227.0px;top:727.0px;" width="36" height="36" viewBox="0 0 24 24"><path d="M18.5 12A7 7 0 1 0 12 19" fill="none" stroke="#484848" stroke-width="2"/><path d="M15 12A3.4 3.4 0 1 0 12 15.4" fill="none" stroke="#484848" stroke-width="2"/><path d="M12 12 L21 15 L17 16.5 L20.5 20 L19.5 21 L16 17.5 L14.5 21 Z" fill="#484848"/></svg>
<svg class="a" style="left:1228.0px;top:852.0px;" width="34" height="34" viewBox="0 0 24 24"><path fill="#484848" d="M18 8h-1V6c0-2.76-2.24-5-5-5S7 3.24 7 6v2H6c-1.1 0-2 .9-2 2v10c0 1.1.9 2 2 2h12c1.1 0 2-.9 2-2V10c0-1.1-.9-2-2-2zM9 6c0-1.66 1.34-3 3-3s3 1.34 3 3v2H9V6zm9 14H6V10h12v10zm-6-3c1.1 0 2-.9 2-2s-.9-2-2-2-2 .9-2 2 .9 2 2 2z"/></svg>
<svg class="a" style="left:1228.0px;top:977.0px;" width="34" height="34" viewBox="0 0 24 24"><circle cx="6" cy="8" r="2.5" fill="none" stroke="#484848" stroke-width="2"/><path d="M10 8H21M3 16H14" stroke="#484848" stroke-width="2"/><circle cx="18" cy="16" r="2.5" fill="none" stroke="#484848" stroke-width="2"/></svg>
<svg class="a" style="left:1679px;top:786px" width="37" height="46" viewBox="-2 -2 37 46"><path d="M9 3 Q9 0 12 0 Q15 0 15 3 L15 13 Q18 11 21 13 Q24 11 27 13.5 Q31 12.5 32 15 L32 30 Q32 36 29 42 L14 42 Q10 38 6 32 L1 25 Q-0.5 22 2 21 Q4 20 6 22 L9 26 Z" fill="#fff" stroke="#000" stroke-width="1.6"/><path d="M21 14V21M27 14.5V21M15 13V21" stroke="#bbb" stroke-width="1"/></svg>
<div class="a" style="left:0;top:1992px;width:3680px;height:78px;background:linear-gradient(90deg,#233f4b 0%,#243e4a 42%,#213546 70%,#1d2c45 100%)"></div>
<svg class="a" style="left:27px;top:2013px" width="37" height="37" viewBox="0 0 37 37"><path d="M1 5.5 L16.5 3.3 V17.3 H1 Z M18.5 3 L35 0.7 V17.3 H18.5 Z M1 19.3 H16.5 V33.4 L1 31.3 Z M18.5 19.3 H35 V35.6 L18.5 33.6 Z" fill="#f4f6f8"/></svg>
<div class="a" style="left:90px;top:1992px;width:555px;height:78px;background:#f1f1f1;"></div>
<svg class="a" style="left:113.0px;top:2013.0px;" width="36" height="36" viewBox="0 0 36 36"><circle cx="21" cy="14" r="7.5" fill="none" stroke="#2a2a2a" stroke-width="2"/><path d="M15.5 19.5L5 30" stroke="#2a2a2a" stroke-width="2.4"/></svg>
<div class="t" style="left:169.0px;top:2017.6px;font-size:27.6px;color:#4a4a4a;font-weight:400;-webkit-text-stroke:0.2px currentColor">Type here to search</div>
<svg class="a" style="left:480px;top:1995px" width="160" height="70" viewBox="0 0 160 70"><path d="M73 11 C78.28 29.72 78.28 29.72 97 35 C78.28 40.28 78.28 40.28 73 59 C67.72 40.28 67.72 40.28 49 35 C67.72 29.72 67.72 29.72 73 11Z" fill="#f6c21c"/><path d="M117 32 C119.42 40.58 119.42 40.58 128 43 C119.42 45.42 119.42 45.42 117 54 C114.58 45.42 114.58 45.42 106 43 C114.58 40.58 114.58 40.58 117 32Z" fill="#f6c21c"/><path d="M35 43 C36.76 49.24 36.76 49.24 43 51 C36.76 52.76 36.76 52.76 35 59 C33.24 52.76 33.24 52.76 27 51 C33.24 49.24 33.24 49.24 35 43Z" fill="#2a9bd8"/><circle cx="103" cy="17" r="3.5" fill="#e0603a"/><circle cx="140" cy="55" r="3" fill="#8cc63f"/></svg>
<svg class="a" style="left:671px;top:2015px" width="36" height="32" viewBox="0 0 36 32"><rect x="2" y="2" width="22" height="3" fill="#e8e8e8"/><rect x="2" y="8" width="22" height="16" fill="none" stroke="#e8e8e8" stroke-width="3"/><rect x="2" y="27" width="22" height="3" fill="#e8e8e8"/><rect x="28" y="2" width="4" height="4" fill="#e8e8e8"/><rect x="28" y="9" width="4" height="21" fill="#e8e8e8"/></svg>
<svg class="a" style="left:766px;top:2010px" width="44" height="42" viewBox="0 0 44 42"><path d="M1 3 H16 L20 7 H43 V38 H1 Z" fill="#e8b840"/><rect x="1" y="10" width="42" height="30" fill="#f8d66a"/><path d="M12 40 V27 Q12 23 16 23 H28 Q32 23 32 27 V40" fill="none" stroke="#4a9fd8" stroke-width="4"/></svg>
<svg class="a" style="left:857px;top:2008px" width="48" height="48" viewBox="0 0 48 48"><defs><linearGradient id="cp1" x1="0" y1="0" x2="0" y2="1"><stop offset="0" stop-color="#2aa7f2"/><stop offset=".5" stop-color="#5ad16a"/><stop offset="1" stop-color="#f0d030"/></linearGradient><linearGradient id="cp2" x1="0" y1="0" x2="0" y2="1"><stop offset="0" stop-color="#b050e0"/><stop offset=".6" stop-color="#f06090"/><stop offset="1" stop-color="#f89050"/></linearGradient></defs><path d="M10 6 Q12 2 17 2 H27 Q31 2 29 8 L20 38 Q18 44 13 44 H8 Q3 44 4 38 Z" fill="url(#cp1)"/><path d="M38 42 Q36 46 31 46 H21 Q17 46 19 40 L28 10 Q30 4 35 4 H40 Q45 4 44 10 Z" fill="url(#cp2)"/></svg>
<svg class="a" style="left:950px;top:2007px" width="48" height="50" viewBox="0 0 48 50"><path d="M15 12 V6 Q15 3 18 3 H30 Q33 3 33 6 V12" fill="none" stroke="#5ab0e0" stroke-width="3"/><path d="M2 12 H46 V42 Q46 48 40 48 H8 Q2 48 2 42 Z" fill="#f4f4f4"/><rect x="16" y="20" width="7" height="7" fill="#e24a2a"/><rect x="25" y="20" width="7" height="7" fill="#6ab830"/><rect x="16" y="29" width="7" height="7" fill="#2a9ad8"/><rect x="25" y="29" width="7" height="7" fill="#f0b820"/></svg>
<svg class="a" style="left:1045px;top:2010px" width="50" height="44" viewBox="0 0 50 44"><path d="M1 14 L25 1 L49 14 V42 H1 Z" fill="#1a5fc0"/><path d="M5 10 H45 L25 24 Z" fill="#f0f4f8"/><path d="M1 16 L25 30 L49 16 V42 H1 Z" fill="#3ab4ee"/><path d="M1 42 L25 28 L49 42 Z" fill="#28a0e6"/></svg>
<svg class="a" style="left:1140px;top:2008px" width="48" height="46" viewBox="0 0 48 46"><path d="M4 14 L24 2 L44 14 V20 L24 10 L4 20 Z" fill="#6ec6f0"/><path d="M4 24 L24 14 L44 24 V30 L24 20 L4 30 Z" fill="#6ec6f0"/><path d="M10 32 L24 25 L38 32 Q34 42 24 45 Q14 42 10 32 Z" fill="#2a78c0"/></svg>
<svg class="a" style="left:1247px;top:2013px" width="24" height="36" viewBox="0 0 24 36"><path d="M2 1 H8 L16 22 V1 H22 V35 H16 L8 14 V35 H2 Z" fill="#d0101a"/></svg>
<div class="a" style="left:1305px;top:1992px;width:85px;height:78px;background:#3b4e57;"></div>
<div class="a" style="left:1390px;top:1992px;width:6px;height:78px;background:#34464f;"></div>
<div class="a" style="left:1305px;top:2066px;width:91px;height:4px;background:#8fb8dc;"></div>
<div class="a" style="left:1406px;top:2066px;width:77px;height:4px;background:#8fb8dc;"></div>
<svg class="a" style="left:1328px;top:2007px" width="47" height="47" viewBox="0 0 48 48"><circle cx="24" cy="24" r="23" fill="#dd4b3e"/><path d="M24 24 L4.1 35.5 A23 23 0 0 0 28 46.6 Z" fill="#1e9d55"/><path d="M24 24 L44 12.5 A23 23 0 0 1 28 46.6 Z" fill="#fbc116"/><path d="M24 24 L4.1 35.5 A23 23 0 0 1 4.1 12.5 L14 24 Z" fill="#1e9d55"/><circle cx="24" cy="24" r="10.5" fill="#fff"/><circle cx="24" cy="24" r="8.2" fill="#4a88e8"/></svg>
<svg class="a" style="left:1421px;top:2007px" width="50" height="50" viewBox="0 0 50 50"><circle cx="23" cy="23" r="21" fill="#1e1e22" stroke="#d8d8d8" stroke-width="2.5"/><circle cx="23" cy="13" r="6" fill="none" stroke="#d8d8d8" stroke-width="2"/><circle cx="14" cy="29" r="6" fill="none" stroke="#d8d8d8" stroke-width="2"/><circle cx="38" cy="37" r="11" fill="#f20a0a"/></svg>
<svg class="a" style="left:2852px;top:2008px" width="56" height="56" viewBox="0 0 56 56"><path d="M8 8 L14 18 L4 22 L15 24 L12 34 L22 26 L28 30 L26 18 Z" fill="#f0b828"/><path d="M6 46 Q2 46 2 40 Q2 33 10 33 Q12 24 22 24 Q32 24 34 33 Q42 33 42 40 Q42 46 36 46 Z" fill="#a8cdf4"/><circle cx="40" cy="11" r="10" fill="#d42020"/><text x="40" y="16" font-size="13" font-weight="700" fill="#fff" text-anchor="middle" font-family="Liberation Sans">3</text></svg>
<div class="t" style="left:2917.0px;top:2018.1px;font-size:27px;color:#f0f0f0;font-weight:400;">28°C</div>
<div class="t" style="left:2990.0px;top:2017.9px;font-size:27.3px;color:#f0f0f0;font-weight:400;">Mostly cloudy</div>
<svg class="a" style="left:3200.0px;top:2019.0px;" width="28" height="28" viewBox="0 0 28 28"><path d="M4 18 L14 8 L24 18" fill="none" stroke="#e8e8e8" stroke-width="2.4"/></svg>
<svg class="a" style="left:3248px;top:2012px" width="28" height="40" viewBox="0 0 28 40"><path d="M5 10 Q5 2 13 2 Q21 2 21 10" fill="none" stroke="#e0e0e0" stroke-width="2.5"/><rect x="3" y="12" width="17" height="15" rx="3" fill="none" stroke="#e0e0e0" stroke-width="3"/><path d="M20 16 L26 13 V26 L20 23" fill="none" stroke="#e0e0e0" stroke-width="2.5"/><path d="M5 30 Q5 38 13 38 Q21 38 21 30" fill="none" stroke="#e0e0e0" stroke-width="2.5"/></svg>
<svg class="a" style="left:3290px;top:2014px" width="36" height="36" viewBox="0 0 36 36"><path d="M4 32 A28 28 0 0 1 32 4 M10 32 A22 22 0 0 1 32 10 M16 32 A16 16 0 0 1 32 16 M22 32 A10 10 0 0 1 32 22" fill="none" stroke="#d8d8d8" stroke-width="2.2"/><circle cx="32" cy="32" r="3" fill="#e8e8e8"/></svg>
<svg class="a" style="left:3336px;top:2014px" width="34" height="36" viewBox="0 0 34 36"><path d="M2 12 H8 L15 5 V31 L8 24 H2 Z" fill="none" stroke="#e0e0e0" stroke-width="2.5"/><path d="M20 13 Q23 18 20 23 M24 9 Q29 18 24 27 M28 5 Q35 18 28 31" fill="none" stroke="#e0e0e0" stroke-width="2.2"/></svg>
<div class="t" style="left:3386.0px;top:2021.4px;font-size:22px;color:#f0f0f0;font-weight:400;">ENG</div>
<div class="t" style="left:2511.0px;width:2000px;text-align:center;top:2004.8px;font-size:22px;color:#f0f0f0;font-weight:400;">6:22 pm</div>
<div class="t" style="left:2511.0px;width:2000px;text-align:center;top:2038.7px;font-size:22.2px;color:#f0f0f0;font-weight:400;">09/10/2025</div>
<svg class="a" style="left:3599px;top:2012px" width="36" height="36" viewBox="0 0 36 36"><path d="M2 2 H34 V27 H22 L18 32 L14 27 H2 Z" fill="none" stroke="#d8dce4" stroke-width="3"/></svg>
<div class="a" style="left:3668px;top:1992px;width:7px;height:78px;background:#3e5068;"></div>
</div>
</body></html>
